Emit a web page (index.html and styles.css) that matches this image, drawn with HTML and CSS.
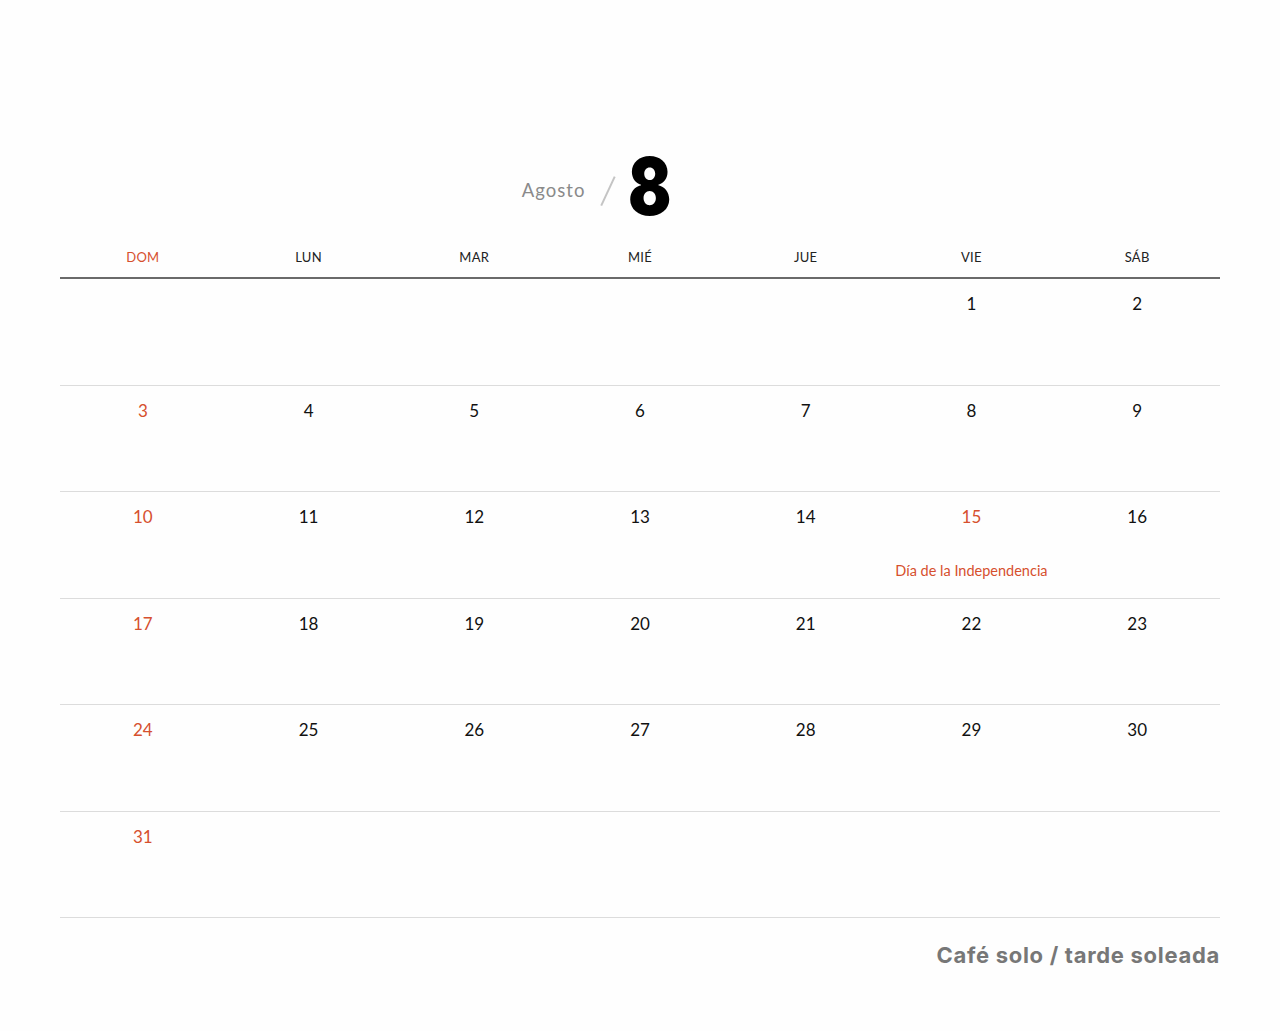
FILE: index.html
```html
<!DOCTYPE html>
<html lang="es">
<head>
<meta charset="utf-8">
<title>Agosto</title>
<link rel="stylesheet" href="styles.css">
</head>
<body>
<div class="page">
  <header class="title">
    <span class="month">Agosto</span>
    <span class="slash"></span>
    <span class="num">8</span>
  </header>
  <div class="weekdays">
    <div class="wd sun">DOM</div>
    <div class="wd">LUN</div>
    <div class="wd">MAR</div>
    <div class="wd">MIÉ</div>
    <div class="wd">JUE</div>
    <div class="wd">VIE</div>
    <div class="wd">SÁB</div>
  </div>
  <div class="grid">
    <div class="cell"></div><div class="cell"></div><div class="cell"></div><div class="cell"></div><div class="cell"></div>
    <div class="cell"><span class="d">1</span></div>
    <div class="cell"><span class="d">2</span></div>

    <div class="cell"><span class="d red">3</span></div>
    <div class="cell"><span class="d">4</span></div>
    <div class="cell"><span class="d">5</span></div>
    <div class="cell"><span class="d">6</span></div>
    <div class="cell"><span class="d">7</span></div>
    <div class="cell"><span class="d">8</span></div>
    <div class="cell"><span class="d">9</span></div>

    <div class="cell"><span class="d red">10</span></div>
    <div class="cell"><span class="d">11</span></div>
    <div class="cell"><span class="d">12</span></div>
    <div class="cell"><span class="d">13</span></div>
    <div class="cell"><span class="d">14</span></div>
    <div class="cell"><span class="d red">15</span><span class="holiday">Día de la Independencia</span></div>
    <div class="cell"><span class="d">16</span></div>

    <div class="cell"><span class="d red">17</span></div>
    <div class="cell"><span class="d">18</span></div>
    <div class="cell"><span class="d">19</span></div>
    <div class="cell"><span class="d">20</span></div>
    <div class="cell"><span class="d">21</span></div>
    <div class="cell"><span class="d">22</span></div>
    <div class="cell"><span class="d">23</span></div>

    <div class="cell"><span class="d red">24</span></div>
    <div class="cell"><span class="d">25</span></div>
    <div class="cell"><span class="d">26</span></div>
    <div class="cell"><span class="d">27</span></div>
    <div class="cell"><span class="d">28</span></div>
    <div class="cell"><span class="d">29</span></div>
    <div class="cell"><span class="d">30</span></div>

    <div class="cell"><span class="d red">31</span></div>
    <div class="cell"></div><div class="cell"></div><div class="cell"></div><div class="cell"></div><div class="cell"></div><div class="cell"></div>
  </div>
  <footer class="foot">Café solo / tarde soleada</footer>
</div>
</body>
</html>
```
FILE: styles.css
```css
html, body {
  margin: 0;
  padding: 0;
  background: #fefefe;
}
body {
  font-family: Lato, "Open Sans", sans-serif;
  color: #111;
}
.page {
  padding: 0 60px;
}
.title {
  height: 236px;
  box-sizing: border-box;
  padding-top: 148px;
  padding-right: 76px;
  display: flex;
  justify-content: center;
  align-items: flex-start;
}
.month {
  margin-top: 30px;
  font-size: 18.5px;
  line-height: 24px;
  letter-spacing: 1px;
  color: #8a8a8a;
}
.slash {
  width: 1.5px;
  height: 32px;
  margin: 27px 19px 0 22px;
  background: #c4c4c4;
  transform: rotate(25deg);
}
.num {
  font-family: Inter, Lato, sans-serif;
  font-size: 80px;
  line-height: 76px;
  font-weight: 900;
  color: #000;
  transform: scaleX(0.8);
  transform-origin: left center;
}
.weekdays {
  display: grid;
  grid-template-columns: repeat(7, 1fr);
  height: 41px;
  border-bottom: 2px solid #6a6a6a;
}
.wd {
  text-align: center;
  font-size: 13px;
  line-height: 20px;
  padding-top: 11px;
  color: #222;
  letter-spacing: 0.3px;
}
.wd.sun { color: #d6502e; }
.grid {
  display: grid;
  grid-template-columns: repeat(7, 1fr);
  grid-auto-rows: 106.5px;
}
.cell {
  border-bottom: 1px solid #dcdcdc;
  display: flex;
  flex-direction: column;
  align-items: center;
  padding-top: 15px;
  box-sizing: border-box;
}
.d {
  font-size: 17px;
  line-height: 20px;
  color: #111;
}
.d.red { color: #d6502e; }
.holiday {
  margin-top: auto;
  margin-bottom: 19px;
  font-size: 14.5px;
  line-height: 16px;
  color: #d6502e;
}
.foot {
  text-align: right;
  padding-top: 24px;
  font-family: Inter, "Liberation Sans", sans-serif;
  font-weight: 700;
  font-size: 22px;
  line-height: 26px;
  letter-spacing: 0.7px;
  color: #777;
}
```
